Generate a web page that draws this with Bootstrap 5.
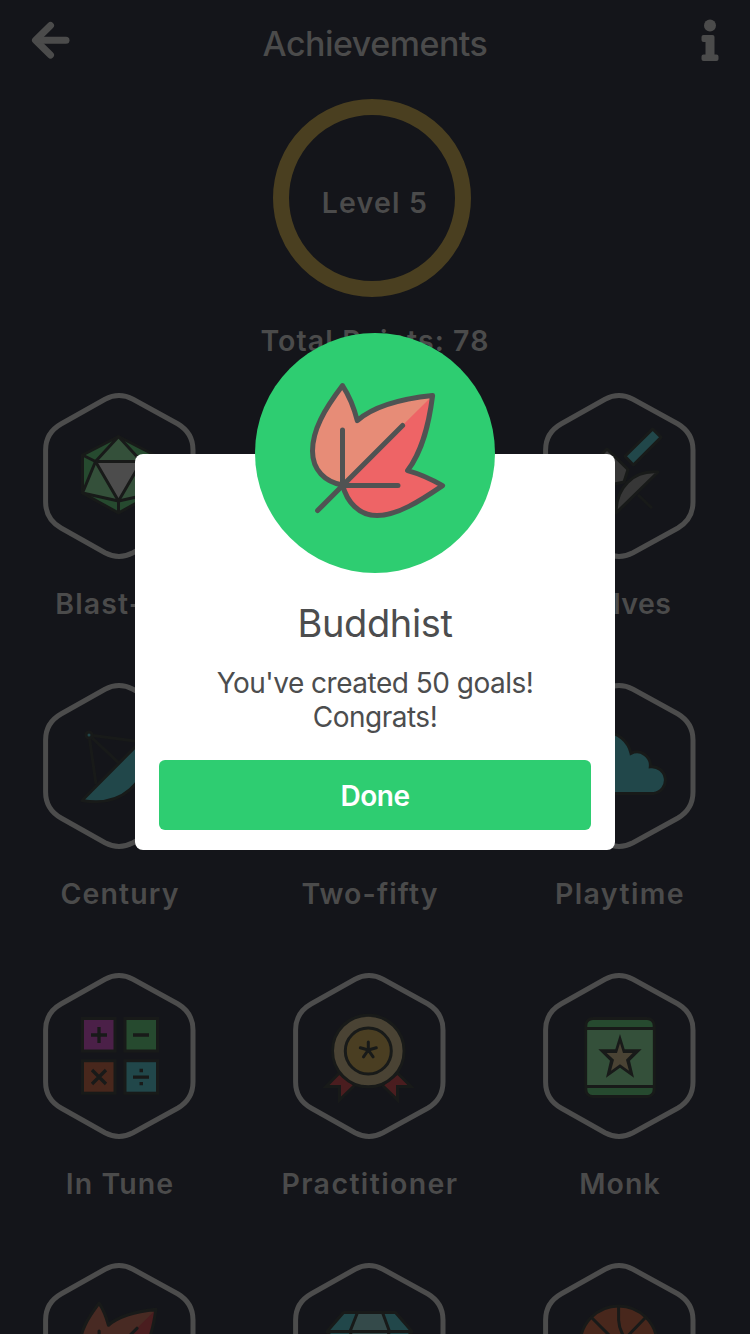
<!DOCTYPE html>
<html lang="en">
<head>
<meta charset="utf-8">
<meta name="viewport" content="width=device-width, initial-scale=1">
<title>Achievements</title>
<link href="https://cdn.jsdelivr.net/npm/bootstrap@5.3.0/dist/css/bootstrap.min.css" rel="stylesheet">
<style>
  body { background: #14151a; color: #4b4b4b; font-family: Inter, "Liberation Sans", sans-serif; }
  .screen { height: 1334px; }
  .topbar { height: 88px; padding: 0 30px; }
  .topbar h1 { font-size: 34px; font-weight: 500; line-height: 1; letter-spacing: -.5px; }
  .level { width: 198px; height: 198px; margin: 11px 7px 0 0; border: 16px solid #4a3f20; }
  .gotham { font-size: 28.5px; font-weight: 600; line-height: 34px; letter-spacing: 1.1px; white-space: nowrap; }
  .gotham.loose { letter-spacing: 1.4px; }
  .gotham.tight { letter-spacing: .4px; padding-left: 6px; }
  .level .gotham { margin: 9px 0 0 7px; letter-spacing: 1.2px; }
  .points { margin-top: 27px; height: 56px; }
  .badge-grid { width: 750px; }
  .tile { height: 290px; padding-right: 10px; }
  .tile svg { width: 180px; height: 190px; }
  .tile .gotham { margin-top: 17px; }
  .frame { fill: none; stroke: #4c4c4c; stroke-width: 5; }
  .ink { stroke: #181a19; stroke-width: 3; }
  .popup { width: 480px; height: 396px; margin-top: 454px; padding: 0 24px; border-radius: 8px; color: #4c4d4e; }
  .medallion { width: 240px; height: 240px; margin-top: -121px; background: #2ecd71; }
  .popup h2 { font-size: 38px; font-weight: 400; line-height: 46px; margin-top: 27px; letter-spacing: -.4px; }
  .popup p { font-size: 28px; line-height: 34px; margin-top: 20px; letter-spacing: -.5px; }
  .popup .btn { height: 70px; margin-top: 26px; padding: 8px 0 6px; border-radius: 6px; border: 0; background: #2ecd71; color: #fff; font-size: 28px; font-weight: 600; letter-spacing: -.5px; }
</style>
</head>
<body>
<svg width="0" height="0" class="position-absolute" aria-hidden="true">
  <defs>
    <path id="hex" d="M15.6 70C15.6 58 20.500 50 31 44L75 19.200C84 14.500 94 14.500 103 19.200L148 44C158 50 163 58 163 70V122C163 134 158 142 148 148L103 172.800C94 177.500 84 177.500 75 172.800L31 148C20.500 142 15.600 134 15.600 122Z"/>
    <path id="leaf" d="M87.500 152C70 149 57.500 137 57.500 118C57.500 97 69 77 87.500 52.600Q97 67 102.300 87.600C118 74 145 66 177.600 62.600C174 90 168 117 152.600 137.600Q169 142 187.600 152.600C165 168 142 182.600 122 182.600C104 182.600 92 169 87.500 152Z"/>
    <path id="leafhalf" d="M87.500 152L177.600 62.600C174 90 168 117 152.600 137.600Q169 142 187.600 152.600C165 168 142 182.600 122 182.600C104 182.600 92 169 87.500 152Z"/>
    <path id="veins" d="M87.500 152.500V97M62.600 177.600L147.600 92.500M87.500 152.500H143"/>
  </defs>
</svg>

<div class="screen position-relative overflow-hidden">
  <header class="topbar d-flex justify-content-between align-items-center">
    <svg width="40" height="44" viewBox="30 22 40 44" overflow="visible"><g fill="none" stroke="#4b4b4b" stroke-width="7" stroke-linecap="round" stroke-linejoin="round"><path d="M50.500 25.500L35.500 40.300L50.500 55"/><path d="M37 40.300H66"/></g></svg>
    <h1 class="m-0">Achievements</h1>
    <svg width="40" height="44" viewBox="680 22 40 44" overflow="visible"><g fill="#4b4b4b"><circle cx="710" cy="25.500" r="6"/><path d="M703.500 35H712.500Q714.500 35 714.500 37V54.500H716.500Q718.500 54.500 718.500 56.500V59Q718.500 61 716.500 61H703.500Q701.500 61 701.500 59V56.500Q701.500 54.500 703.500 54.500H705.500V42H703.500Q701.500 42 701.500 40V37Q701.500 35 703.500 35Z"/></g></svg>
  </header>

  <section class="d-flex flex-column align-items-center">
    <div class="level rounded-circle d-flex justify-content-center align-items-center"><span class="gotham">Level 5</span></div>
    <div class="points gotham">Total Points: 78</div>
  </section>

  <main>
    <div class="badge-grid row g-0 text-center">
      <div class="col-4 tile">
        <svg viewBox="0 0 180 190"><use href="#hex" class="frame"/>
          <g class="ink" stroke-linejoin="round"><path fill="#264a2f" d="M88.500 56.500L124.500 75V113L88.500 133L52.500 113V75Z"/><path fill="#34503a" d="M88.500 56.500L111.500 81.500L124.500 113L88.500 121L52.500 113L65.500 81.500Z"/><path fill="#4c4c4c" d="M65.500 81.500H111.500L88.500 121Z"/><path d="M52.500 75L65.500 81.500M124.500 75L111.500 81.500M88.500 121V133"/></g></svg>
        <div class="gotham">Blast-off</div>
      </div>
      <div class="col-4 tile"><svg viewBox="0 0 180 190"><use href="#hex" class="frame"/></svg></div>
      <div class="col-4 tile">
        <svg viewBox="0 0 180 190"><use href="#hex" class="frame"/>
          <g class="ink" stroke-linejoin="round"><path fill="#21474a" d="M122.700 49L131 57.300L103.300 85L95 76.300Z"/><path fill="#373737" d="M77 69L98 89.500L94 102L80 105L66 80Z"/><path fill="#373737" d="M86 133C86 108 103 90 128 92Z"/><path d="M108 115L122 128"/></g></svg>
        <div class="gotham tight">Halves</div>
      </div>
      <div class="col-4 tile">
        <svg viewBox="0 0 180 190"><use href="#hex" class="frame"/>
          <g class="ink" stroke-linejoin="round"><path d="M59 65L120 73M59 65L90 94M59 65L66 114"/><path fill="#21474a" d="M52 130.500L120 62C121 118 88 137 52 130.500Z"/><circle cx="59" cy="65" r="3" fill="#21474a"/></g></svg>
        <div class="gotham">Century</div>
      </div>
      <div class="col-4 tile"><svg viewBox="0 0 180 190"><use href="#hex" class="frame"/></svg><div class="gotham">Two-fifty</div></div>
      <div class="col-4 tile">
        <svg viewBox="0 0 180 190"><use href="#hex" class="frame"/>
          <path class="ink" fill="#21474a" d="M55 123.500H123.600A13.300 13.300 0 0 0 120.300 96.800A13.500 13.500 0 0 0 101 83.300A27 27 0 0 0 75 62H55Z"/></svg>
        <div class="gotham loose">Playtime</div>
      </div>
      <div class="col-4 tile">
        <svg viewBox="0 0 180 190"><use href="#hex" class="frame"/>
          <g class="ink"><rect x="52.500" y="58.500" width="32.500" height="32.500" fill="#4b2048"/><rect x="95" y="58.500" width="32.500" height="32.500" fill="#264a2f"/><rect x="52.500" y="100.700" width="32.500" height="32.500" fill="#48271c"/><rect x="95" y="100.700" width="32.500" height="32.500" fill="#21474a"/><path d="M61 75H77M69 67V83M103 75H119M62 110L76 124M76 110L62 124M103 117.200H119M109.500 110.500H113M109.500 123.700H113" stroke-width="3.300"/></g></svg>
        <div class="gotham">In Tune</div>
      </div>
      <div class="col-4 tile">
        <svg viewBox="0 0 180 190"><use href="#hex" class="frame"/>
          <g class="ink"><path fill="#4a1d1f" d="M59.300 113L46 126.500H59.500V140L75 125Z M117.500 113L131 126.500H117.500V140L102 125Z"/><circle cx="88.300" cy="91" r="35.800" fill="#4a4334"/><circle cx="88.300" cy="91" r="23" fill="#4a3e22"/><path stroke-linecap="round" d="M88.300 90V82M88.300 90L80.300 87.800M88.300 90L96.300 87.800M88.300 90L83.500 96.800M88.300 90L93.100 96.800"/></g></svg>
        <div class="gotham loose">Practitioner</div>
      </div>
      <div class="col-4 tile">
        <svg viewBox="0 0 180 190"><use href="#hex" class="frame"/>
          <rect class="ink" x="55.800" y="58.500" width="68.400" height="78" rx="7" fill="#264a2f"/><path fill="#34503a" d="M57.300 70H122.700V125H57.300Z"/><path class="ink" d="M56 68.500H124M56 126.500H124"/>
          <g transform="translate(-10 0) scale(.33333)"><path fill="#181a19" d="M300 222L314 268H365L330 302L342 353L300 323L258 353L270 302L235 268H286Z"/><path fill="#4a4334" d="M300 250L309 279H338L318 299L327 332L300 313L273 332L282 299L260 279H291Z"/></g></svg>
        <div class="gotham">Monk</div>
      </div>
      <div class="col-4 tile">
        <svg viewBox="0 0 180 190"><use href="#hex" class="frame"/>
          <g transform="translate(14 20) scale(.63)" stroke="#181a19" stroke-width="5" stroke-linecap="round" stroke-linejoin="round"><use href="#leaf" fill="#482a23" stroke="none"/><use href="#leafhalf" fill="#4a1d1f" stroke="none"/><use href="#leaf" fill="none"/><use href="#veins"/></g></svg>
      </div>
      <div class="col-4 tile">
        <svg viewBox="0 0 180 190"><use href="#hex" class="frame"/>
          <g class="ink" stroke-linejoin="round"><path fill="#21474a" d="M63.500 62.500H115.500L132 81.500L88.500 135L47 81.500Z"/><path fill="#344a4a" d="M77.500 62.500H102.500L109.500 81.500L88.500 135L70 81.500Z"/><path d="M47 81.500H132"/></g></svg>
      </div>
      <div class="col-4 tile">
        <svg viewBox="0 0 180 190"><use href="#hex" class="frame"/>
          <g class="ink"><circle cx="88.600" cy="94.500" r="38.500" fill="#48271c"/><path fill="none" d="M88.600 56V70Q89 80 96 90M61 67L88 94M116 67L90 94"/></g></svg>
      </div>
    </div>
  </main>

  <div class="position-absolute top-0 start-0 w-100 h-100 d-flex justify-content-center align-items-start">
    <div class="popup bg-white d-flex flex-column align-items-center text-center" role="dialog" aria-label="Buddhist">
      <div class="medallion rounded-circle flex-shrink-0">
        <svg width="240" height="240" viewBox="0 0 240 240" stroke="#505353" stroke-width="5" stroke-linecap="round" stroke-linejoin="round"><use href="#leaf" fill="#e78c77" stroke="none"/><use href="#leafhalf" fill="#ee6466" stroke="none"/><use href="#leaf" fill="none"/><use href="#veins"/></svg>
      </div>
      <h2 class="mb-0">Buddhist</h2>
      <p class="mb-0">You've created 50 goals!<br>Congrats!</p>
      <button type="button" class="btn w-100 flex-shrink-0">Done</button>
    </div>
  </div>
</div>
<script src="https://cdn.jsdelivr.net/npm/bootstrap@5.3.0/dist/js/bootstrap.bundle.min.js"></script>
</body>
</html>
